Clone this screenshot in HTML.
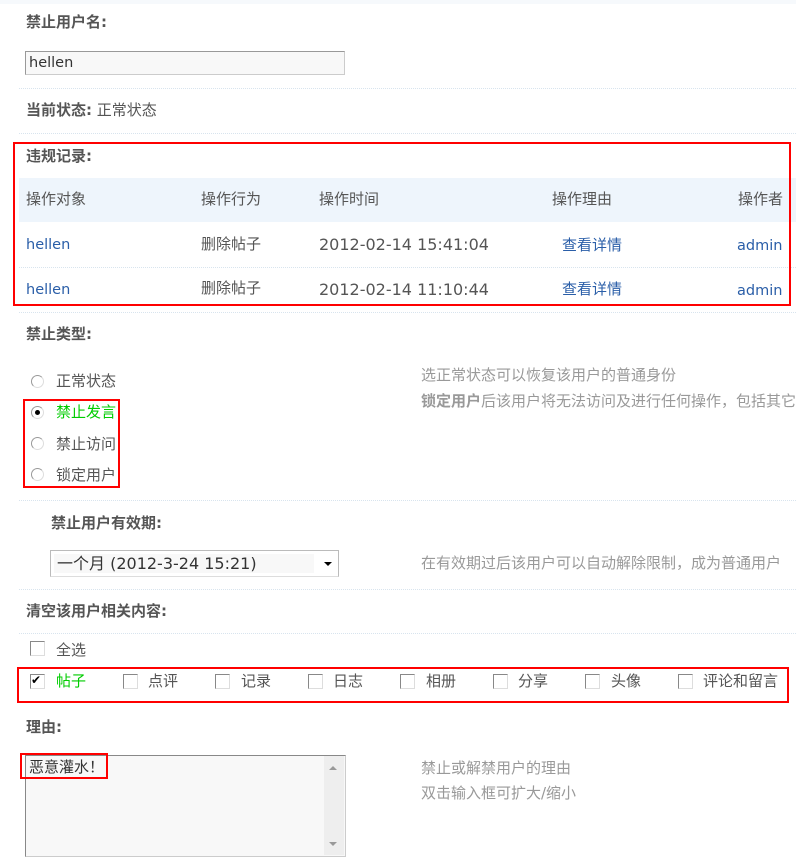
<!DOCTYPE html>
<html><head><meta charset="utf-8"><style>
body{margin:0;width:796px;height:863px;background:#fff;position:relative;overflow:hidden;font-family:"DejaVu Sans","Noto Sans CJK SC",sans-serif;font-size:15px;color:#555}
.t{position:absolute;white-space:nowrap;line-height:16px}
.b{font-weight:bold}
.g{color:#999}
.l{color:#2a5ea8}
.n{font-size:14.5px}
.d{font-size:16px}
.dl{position:absolute;left:19px;right:0;border-top:1px dotted #d8e4ee;height:0}
.red{position:absolute;border:2px solid #f00;box-sizing:border-box}
.cb{position:absolute;width:13px;height:13px;border:1px solid #888;border-right-color:#ddd;border-bottom-color:#ddd;background:#fff}
.rd{position:absolute;width:11px;height:11px;border-radius:50%;border:1px solid #999;border-right-color:#ddd;border-bottom-color:#ddd;background:#fff}
</style></head><body>
<div style="position:absolute;left:0;top:0;width:796px;height:4px;background:#f6f9fc"></div>
<div class="t b" style="left:26px;top:14px">禁止用户名:</div>
<div style="position:absolute;left:25px;top:51px;width:318px;height:22px;border:1px solid #999;border-right-color:#ccc;border-bottom-color:#ccc;background:#f8f8f8"></div>
<div class="t n" style="left:29px;top:55px;color:#333">hellen</div>
<div class="dl" style="top:88px"></div>
<div class="t" style="left:26px;top:102px"><b>当前状态:</b> 正常状态</div>
<div class="dl" style="top:133px"></div>

<div class="t b" style="left:26px;top:148px">违规记录:</div>
<div style="position:absolute;left:19px;top:178px;width:777px;height:44px;background:#eef5fc"></div>
<div class="t" style="left:26px;top:191px">操作对象</div>
<div class="t" style="left:201px;top:191px">操作行为</div>
<div class="t" style="left:319px;top:191px">操作时间</div>
<div class="t" style="left:552px;top:191px">操作理由</div>
<div class="t" style="left:738px;top:191px">操作者</div>
<div class="t l n" style="left:26px;top:237px">hellen</div>
<div class="t" style="left:201px;top:236px">删除帖子</div>
<div class="t d" style="left:319px;top:237px">2012-02-14 15:41:04</div>
<div class="t l" style="left:562px;top:237px">查看详情</div>
<div class="t l n" style="left:737px;top:238px">admin</div>
<div class="dl" style="top:267px"></div>
<div class="t l n" style="left:26px;top:282px">hellen</div>
<div class="t" style="left:201px;top:280px">删除帖子</div>
<div class="t d" style="left:319px;top:282px">2012-02-14 11:10:44</div>
<div class="t l" style="left:562px;top:281px">查看详情</div>
<div class="t l n" style="left:737px;top:283px">admin</div>
<div class="red" style="left:13px;top:142px;width:778px;height:164px"></div>
<div class="dl" style="top:312px"></div>

<div class="t b" style="left:26px;top:326px">禁止类型:</div>
<div class="rd" style="left:31px;top:375px"></div>
<div class="t" style="left:56px;top:373px">正常状态</div>
<div class="rd" style="left:31px;top:406px"></div><div style="position:absolute;left:35px;top:410px;width:5px;height:5px;border-radius:50%;background:#000"></div>
<div class="t" style="left:56px;top:404px;color:#0c0">禁止发言</div>
<div class="rd" style="left:31px;top:437px"></div>
<div class="t" style="left:56px;top:436px">禁止访问</div>
<div class="rd" style="left:31px;top:468px"></div>
<div class="t" style="left:56px;top:467px">锁定用户</div>
<div class="red" style="left:23px;top:399px;width:97px;height:89px"></div>
<div class="t g" style="left:421px;top:367px">选正常状态可以恢复该用户的普通身份</div>
<div class="t g" style="left:421px;top:393px"><b>锁定用户</b>后该用户将无法访问及进行任何操作，包括其它</div>
<div class="dl" style="top:500px"></div>

<div class="t b" style="left:51px;top:515px">禁止用户有效期:</div>
<div style="position:absolute;left:50px;top:550px;width:287px;height:25px;border:1px solid #bbb;border-bottom-color:#ddd;background:#fff"></div>
<div style="position:absolute;left:54px;top:554px;width:260px;height:19px;background:#f8f8f8"></div>
<div class="t d" style="left:57px;top:556px;color:#333">一个月 (2012-3-24 15:21)</div>
<div style="position:absolute;left:324px;top:562px;border-left:4px solid transparent;border-right:4px solid transparent;border-top:4px solid #000"></div>
<div class="t g" style="left:421px;top:555px">在有效期过后该用户可以自动解除限制，成为普通用户</div>
<div class="dl" style="top:589px"></div>

<div class="t b" style="left:26px;top:603px">清空该用户相关内容:</div>
<div class="dl" style="top:633px"></div>
<div class="cb" style="left:30px;top:641px"></div>
<div class="t" style="left:56px;top:642px">全选</div>

<div class="cb" style="left:30px;top:674px"></div><div class="t" style="left:31px;top:672px;font-size:12px;color:#000">✔</div>
<div class="t" style="left:56px;top:673px;color:#0c0">帖子</div>
<div class="cb" style="left:123px;top:674px"></div><div class="t" style="left:148px;top:673px">点评</div>
<div class="cb" style="left:215px;top:674px"></div><div class="t" style="left:241px;top:673px">记录</div>
<div class="cb" style="left:308px;top:674px"></div><div class="t" style="left:333px;top:673px">日志</div>
<div class="cb" style="left:400px;top:674px"></div><div class="t" style="left:426px;top:673px">相册</div>
<div class="cb" style="left:493px;top:674px"></div><div class="t" style="left:518px;top:673px">分享</div>
<div class="cb" style="left:585px;top:674px"></div><div class="t" style="left:611px;top:673px">头像</div>
<div class="cb" style="left:678px;top:674px"></div><div class="t" style="left:703px;top:673px">评论和留言</div>
<div class="red" style="left:17px;top:667px;width:772px;height:36px"></div>

<div class="t b" style="left:26px;top:719px">理由:</div>
<div style="position:absolute;left:25px;top:755px;width:319px;height:100px;border:1px solid #888;border-right-color:#ccc;border-bottom-color:#ccc;background:#f8f8f8"></div>
<div style="position:absolute;left:324px;top:756px;width:20px;height:99px;background:#eee"></div>
<div style="position:absolute;left:329px;top:766px;border-left:4px solid transparent;border-right:4px solid transparent;border-bottom:4px solid #999"></div>
<div style="position:absolute;left:329px;top:842px;border-left:4px solid transparent;border-right:4px solid transparent;border-top:4px solid #999"></div>
<div class="t" style="left:29px;top:759px;color:#333">恶意灌水！</div>
<div class="red" style="left:20px;top:753px;width:88px;height:26px"></div>
<div class="t g" style="left:421px;top:760px">禁止或解禁用户的理由</div>
<div class="t g" style="left:421px;top:785px">双击输入框可扩大/缩小</div>
</body></html>
